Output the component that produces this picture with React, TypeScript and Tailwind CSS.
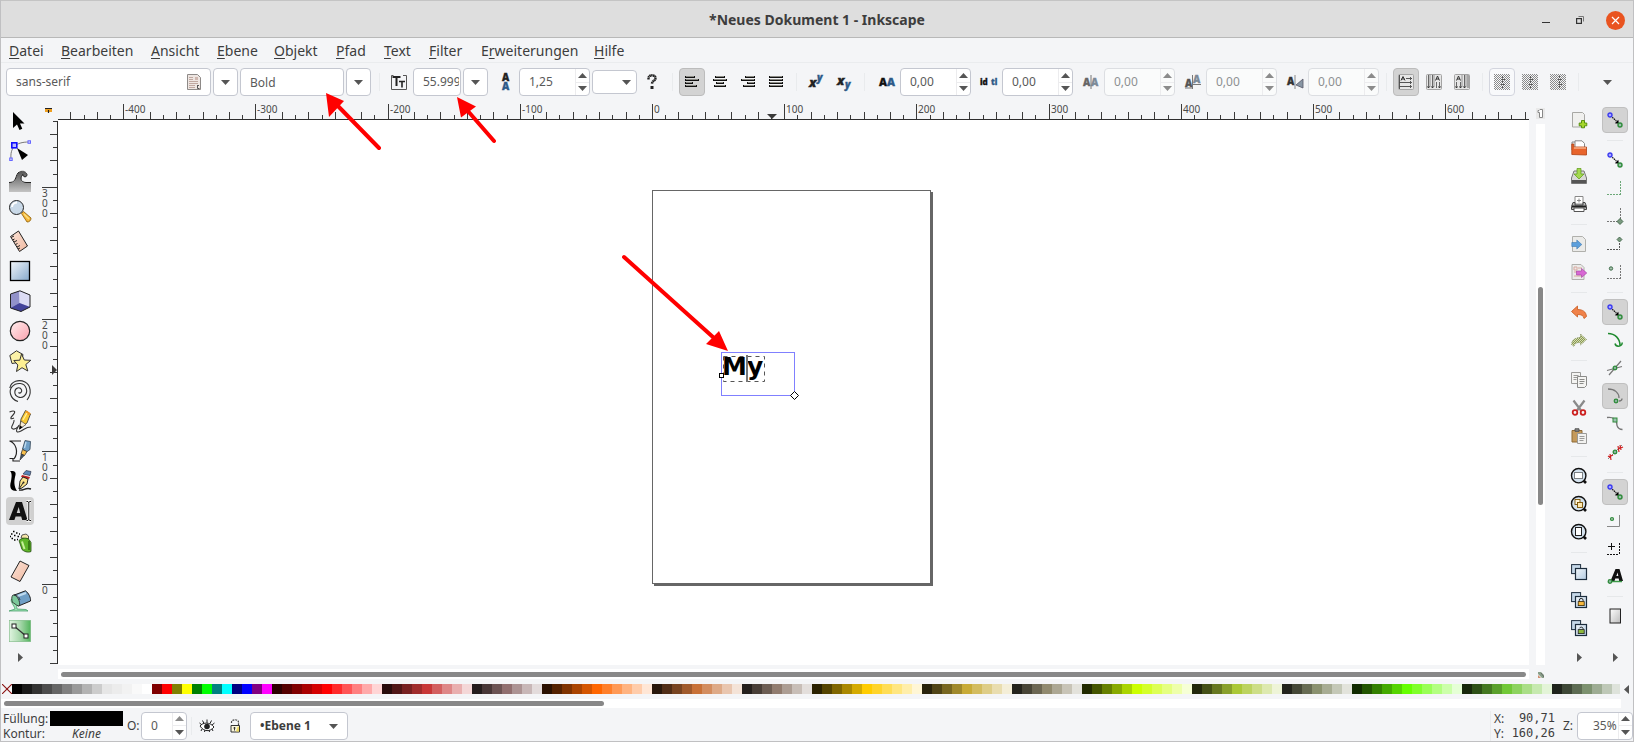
import React, { ReactNode } from "react";

/* ---------- data ---------- */

const MENUS: [string, string, string, string][] = [
  ["", "D", "atei", "w-[36px]"],
  ["", "B", "earbeiten", "w-[74px]"],
  ["", "A", "nsicht", "w-[50px]"],
  ["", "E", "bene", "w-[41px]"],
  ["", "O", "bjekt", "w-[46px]"],
  ["", "P", "fad", "w-[32px]"],
  ["", "T", "ext", "w-[29px]"],
  ["", "F", "ilter", "w-[36px]"],
  ["E", "r", "weiterungen", "w-[97px]"],
  ["", "H", "ilfe", "w-[32px]"],
];

const PALETTE = (
  "000000 1a1a1a 333333 4d4d4d 666666 808080 999999 b3b3b3 cccccc e6e6e6 ececec f2f2f2 f9f9f9 ffffff " +
  "800000 ff0000 808000 ffff00 008000 00ff00 008080 00ffff 000080 0000ff 800080 ff00ff " +
  "2b0000 550000 800000 aa0000 d40000 ff0000 ff2a2a ff5555 ff8080 ffaaaa ffd5d5 " +
  "280b0b 501616 782121 a02c2c c83737 d35f5f de8787 e9afaf f4d7d7 " +
  "241c1c 483737 6c5353 916f6f ac9393 c8b7b7 e3dbdb " +
  "2b1100 552200 803300 aa4400 d45500 ff6600 ff7f2a ff9955 ffb380 ffccaa ffe6d5 " +
  "28170b 502d16 784421 a05a2c c87137 d38d5f deaa87 e9c6af f4e3d7 " +
  "241f1c 483e37 6c5d53 917c6f ac9d93 c8beb7 e3dedb " +
  "2b2200 554400 806600 aa8800 d4aa00 ffcc00 ffd42a ffdd55 ffe680 ffeeaa fff6d5 " +
  "28220b 504416 786721 a0892c c8ab37 d3bc5f decd87 e9ddaf f4eed7 " +
  "24231c 484537 6c6753 918a6f aca793 c8c4b7 e3e2db " +
  "222b00 445500 668000 88aa00 aad400 ccff00 d4ff2a ddff55 e5ff80 eeffaa f6ffd5 " +
  "22280b 445016 677821 89a02c abc837 bcd35f cdde87 dde9af eef4d7 " +
  "23241c 454837 676c53 8a916f a7ac93 c4c8b7 e2e3db " +
  "112b00 225500 338000 44aa00 55d400 66ff00 7fff2a 99ff55 b3ff80 ccffaa e5ffd5 " +
  "17280b 2d5016 447821 5aa02c 71c837 8dd35f aade87 c6e9af e3f4d7 " +
  "1f241c 3e4837 5d6c53 7c916f 9dac93 bec8b7 dee3db"
).split(" ");

const STEP = 13.22;

/* ---------- small parts ---------- */

function Ico({ s = 16, children }: { s?: number; children: ReactNode }) {
  return (
    <svg width={s} height={s} viewBox={`0 0 ${s} ${s}`} fill="none" aria-hidden="true" className="shrink-0 overflow-visible">
      {children}
    </svg>
  );
}

function Tri({ dir, dim }: { dir: "up" | "down" | "left" | "right"; dim?: boolean }) {
  const d = {
    down: "M1 3h9l-4.500 5z",
    up: "M1 8h9l-4.500-5z",
    left: "M8 1v9l-5-4.500z",
    right: "M3 1v9l5-4.500z",
  }[dir];
  return (
    <svg width="11" height="11" viewBox="0 0 11 11" aria-hidden="true" className="shrink-0">
      <path d={d} fill={dim ? "#8b8b8b" : "#555555"} />
    </svg>
  );
}

function Btn({ label, on, framed, children }: { label: string; on?: boolean; framed?: boolean; children: ReactNode }) {
  const look = on ? "border-[#bcbcbc] bg-[#d3d3d3]" : framed ? "border-[#d3d5de] bg-[#f8f9fb]" : "border-transparent";
  return (
    <button aria-label={label} className={`flex h-7 w-[26px] shrink-0 items-center justify-center rounded-[4px] border ${look}`}>
      {children}
    </button>
  );
}

function Drop({ label }: { label: string }) {
  return (
    <button aria-label={label} className="flex h-7 w-[25px] shrink-0 items-center justify-center rounded-[4px] border border-[#c4c7d0] bg-white">
      <Tri dir="down" />
    </button>
  );
}

function Spin({ label, value, width, dim, dimUp, pad = "pl-[9px]" }: { label: string; value: string; width: string; dim?: boolean; dimUp?: boolean; pad?: string }) {
  return (
    <div className={`flex h-7 shrink-0 overflow-hidden rounded-[4px] border ${width} ${dim ? "border-[#dcdee2] bg-[#fafbfb]" : "border-[#c4c7d0] bg-white"}`}>
      <input aria-label={label} defaultValue={value} disabled={dim} className={`min-w-0 flex-1 bg-transparent text-xs outline-none ${pad} ${dim ? "text-[#8e9092]" : "text-[#5a5a5a]"}`} />
      <div className="flex w-[14px] shrink-0 flex-col border-l border-[#ececee]">
        <button aria-label={label + " erhöhen"} className="flex flex-1 items-center justify-center border-b border-[#ececee]">
          <Tri dir="up" dim={dim || dimUp} />
        </button>
        <button aria-label={label + " verringern"} className="flex flex-1 items-center justify-center">
          <Tri dir="down" dim={dim} />
        </button>
      </div>
    </div>
  );
}

function Tag({ children }: { children: ReactNode }) {
  return <span className="flex w-[27px] shrink-0 items-center justify-center pl-1">{children}</span>;
}

function VSep({ w = "w-[10px]" }: { w?: string }) {
  return (
    <span className={`flex shrink-0 justify-center ${w}`}>
      <span className="h-[18px] w-px bg-[#e9ebed]" />
    </span>
  );
}

function HSep() {
  return (
    <span className="flex h-3 w-7 shrink-0 items-center justify-center">
      <span className="h-px w-4 bg-[#e6e8ea]" />
    </span>
  );
}

/* ---------- toolbar glyphs ---------- */

function Lines({ rows }: { rows: [number, number][] }) {
  return (
    <Ico>
      {rows.map(([x, w], i) => (
        <g key={i}>
          <rect x={x} y={2 + i * 3} width={w} height="2" rx="0.5" fill="#8b8b84" />
          <rect x={x} y={3 + i * 3} width={w} height="1" fill="#111" />
          <rect x={x} y={2 + i * 3} width="1" height="2" fill="#111" />
          <rect x={x + w - 1} y={2 + i * 3} width="1" height="2" fill="#111" />
        </g>
      ))}
    </Ico>
  );
}

function Glyph({ x, y, size, fill, children, italic }: { x: number; y: number; size: number; fill: string; children: string; italic?: boolean }) {
  return (
    <text x={x} y={y} fontSize={size} fontWeight="800" fill={fill} stroke={fill} strokeWidth="0.3" fontStyle={italic ? "italic" : "normal"} fontFamily='"Open Sans", "Noto Sans", sans-serif'>
      {children}
    </text>
  );
}

function WritingMode({ kind }: { kind: "h" | "vr" | "vl" }) {
  return (
    <Ico>
      <rect x="0.500" y="0.500" width="15" height="15" rx="1" fill="#e6e6e6" stroke="#a4a4a4" />
      {kind === "h" ? (
        <>
          <path d="M1.500 1v14M1.500 8.500h12M1.500 12.500h12M8 4.500h6M12 3l1.500 1.500L12 6M12 7l1.500 1.500L12 10M12 11l1.500 1.500L12 14" stroke="#444" strokeWidth="0.900" />
          <path d="M3 6.500l2-4 2 4M3.500 5h3" stroke="#333" />
        </>
      ) : kind === "vr" ? (
        <>
          <path d="M4 1v12M8 1v12" stroke="#bdbdbd" strokeWidth="2" />
          <path d="M2.500 1v13M6.500 1v13M10.500 8v6M13.500 8v6" stroke="#666" />
          <path d="M1.500 12.500l1 1.500 1-1.500M5.500 12.500l1 1.500 1-1.500M12.500 12.500l1 1.500 1-1.500" stroke="#333" />
          <path d="M9.500 6.500l2-4.500 2 4.500M10 5h3" stroke="#333" />
        </>
      ) : (
        <>
          <path d="M8 1v12M12 1v12" stroke="#bdbdbd" strokeWidth="2" />
          <path d="M2.500 8v6M6.500 8v6M10.500 1v13M14 1v13" stroke="#666" />
          <path d="M1.500 12.500l1 1.500 1-1.500M5.500 12.500l1 1.500 1-1.500M9.500 12.500l1 1.500 1-1.500" stroke="#333" />
          <path d="M2.500 6.500l2-4.500 2 4.500M3 5h3" stroke="#333" />
        </>
      )}
    </Ico>
  );
}

function Orientation({ shift }: { shift: number }) {
  return (
    <Ico>
      <rect width="16" height="16" fill="url(#dots)" shapeRendering="crispEdges" />
      <path d={`M${8.5 + shift} 2v2M${7 + shift} 5.500h4M${8.5 + shift} 7v2M${7 + shift} 10.500h4M${8.5 + shift} 12v2`} stroke="#5a5a5a" />
    </Ico>
  );
}

/* ---------- toolbox ---------- */

const TOOLS: [string, ReactNode][] = [
  ["Auswählen", <path key="a" d="M4 2v16l4-3.500 2.500 5.500 2.800-1.300L11 13.500h4.500z" fill="#000" />],
  ["Knoten", (
    <g key="b">
      <path d="M2 19C1 8 6 2 20 2" stroke="#777" />
      <rect x="2.800" y="2.800" width="5" height="5" fill="#bcbcff" stroke="#1010ff" strokeWidth="1.600" />
      <rect x="19" y="0.800" width="2.500" height="2.500" fill="#ccf" stroke="#66f" />
      <rect x="0.700" y="18" width="2.500" height="2.500" fill="#ccf" stroke="#66f" />
      <path d="M8 8l11 7-6 5z" fill="#000" />
    </g>
  )],
  ["Modellieren", (
    <g key="c">
      <path d="M0 13c6 0 6-3 8-8 2-5 9-5 10 0 0 3-4 3-4 0-3 2-3 8 3 8h5v9H0z" fill="url(#wave)" />
      <path d="M0 12.500c6 0 6-3 8-8 2-4.500 9-4.500 10 0 0 3-4 3-4 0-3 2-3 8 3 8h5" stroke="#222" />
      <path d="M1 10.500c4 0 4-3 6-6.500C9-.5 17-.5 18.500 4" stroke="#fff" strokeWidth="0.600" />
    </g>
  )],
  ["Zoom", (
    <g key="d">
      <path d="M12.500 13.500l2-2 7.500 6.500c0 2.500-1.500 4-4 4z" fill="#f6b73c" stroke="#8a5a00" strokeWidth="0.800" />
      <path d="M15 14l5 5" stroke="#fde080" strokeWidth="1.500" />
      <circle cx="7.500" cy="7.500" r="7" fill="#c9d9e8" stroke="#222" />
      <path d="M3 7a5 5 0 015-4.500" stroke="#fff" strokeWidth="2" />
    </g>
  )],
  ["Messen", (
    <g key="e">
      <path d="M1.500 6.500l8-5.500 9 15-8 5.500z" fill="url(#pink)" stroke="#222" />
      <path d="M2 7.500l3-1.500M3.500 10l2-1M5 12l3-1.500M6.500 14.500l2-1M8 17l3-1.500M9 19l2-1" stroke="#222" />
    </g>
  )],
  ["Rechteck", <rect key="f" x="1.500" y="1.500" width="19" height="19" fill="url(#steel)" stroke="#000" strokeWidth="1.300" />],
  ["3D-Box", (
    <g key="g">
      <path d="M1.500 4L11 .8l10 4.200v12L12 21.500 1.500 18z" fill="#b4b4de" />
      <path d="M1.500 4l8.500-3 .5 12-9 5z" fill="#9292ca" />
      <path d="M10 1l11 4v12l-10.500-4z" fill="#dcdcf4" />
      <path d="M1.500 18l9-5L21 17l-9 4.500z" fill="#44449a" />
      <path d="M1.500 4L11 .8l10 4.200v12L12 21.500 1.500 18z" stroke="#222" />
    </g>
  )],
  ["Ellipse", <circle key="h" cx="11" cy="11" r="9.700" fill="url(#rose)" stroke="#222" strokeWidth="1.200" />],
  ["Stern", (
    <g key="i">
      <path d="M.8 5.500L7.500.8 14 4.500 12.500 12l-9.500 1.500z" fill="#fbf2a8" stroke="#333" />
      <path d="M12.500 4l2.800 6 6.500.3-5 4.200 2 6.500-5.800-3.300-5.500 3.800 1.300-6.500-4-4.500 6-.3z" fill="#fdf092" stroke="#333" />
    </g>
  )],
  ["Spirale", <path key="j" d="M9.500 12.500c1.500 1.500 4-.5 3-2.700C11 6.500 6 7.500 5.800 12c0 5 6 7 9.500 4 4.500-4 2-12-4-12.500C4 3 0 9 1.500 14c1 4 4 6.500 7.500 7.500M18 20c5-6 4-15-2-18C10-1 2 1 .8 8" stroke="#333" strokeWidth="1.100" />],
  ["Freihand", (
    <g key="k">
      <path d="M.5 2C6-.5 7 2 4 5s-3 5 1 3M5 10c1 3-5 8-1 9s8-7 5-2-1 6 3 4 5-4 10-4" stroke="#333" strokeWidth="1.100" />
      <path d="M10.500 19L12 9l4.500-8.500L21.500 4 18 13z" fill="#f8c832" stroke="#333" strokeWidth="0.800" />
      <path d="M10.500 19L12 11l5 3.500z" fill="#f8ecd4" stroke="#333" strokeWidth="0.600" />
      <path d="M10.300 19.500l.8-4 2.600 1.800z" fill="#000" />
      <path d="M17 1.500l4 3" stroke="#f09820" strokeWidth="2.400" />
      <path d="M14 10l4-7" stroke="#fff0a0" strokeWidth="1.300" />
    </g>
  )],
  ["Bézier", (
    <g key="l">
      <path d="M.5 1H12M.5 1C7 3 10 12 5 19M.5 18.500H4v2.500h7" stroke="#222" strokeWidth="1.200" />
      <path d="M13.500 9l2.500-8.500 5.500 1-.5 8-3.500 2.500z" fill="#6fa0c8" stroke="#234" strokeWidth="0.700" />
      <path d="M15.500 8l1.500-6" stroke="#c0dcf0" strokeWidth="1.300" />
      <path d="M12 14l1.500-4.500 4.500 2-2.500 4z" fill="#f8c04c" stroke="#333" strokeWidth="0.800" />
      <path d="M11 20l1.200-6 3 1.500z" fill="#456" stroke="#222" strokeWidth="0.600" />
    </g>
  )],
  ["Kalligrafie", (
    <g key="m">
      <path d="M1 1c4 0 7 0 5 6-1 5-1 9 2 14-6 0-8-3-6-10 1-5 1-8-1-10z" fill="#000" />
      <path d="M14 4l3-3.500 5 1-1 4z" fill="#5a86b8" stroke="#223" strokeWidth="0.600" />
      <path d="M13 5l8 2-1 2-8-2z" fill="#c02020" />
      <path d="M10 19l1-8 3-4 5 2-1 5-5 4z" fill="#fbe28a" stroke="#222" />
      <path d="M10 19l4-6" stroke="#222" /><circle cx="14.500" cy="12.500" r="1" fill="#222" />
      <path d="M10 20c5 1 6-3 12-1" stroke="#222" strokeWidth="1.400" />
    </g>
  )],
  ["Text", (
    <g key="n">
      <path fillRule="evenodd" d="M0 20L7 2h6l5.500 18h-5.300l-1-3.500H6.600L5.400 20zM7.700 13h3.500L9.700 7z" fill="#111" />
      <path d="M17.500 1.500h1.500l.8.8.8-.8H22M19.800 2v18M17.500 20.500h1.500l.8-.8.8.8H22" stroke="#fff" strokeWidth="2.600" />
      <path d="M17.500 1.500h1.500l.8.800.8-.8H22M19.800 2v18M17.500 20.500h1.500l.8-.8.8.8H22" stroke="#111" />
    </g>
  )],
  ["Spray", (
    <g key="o">
      <path d="M2 4h1.500M4 1.500h1.500M5 5.500h1.500M2.500 8.500H4M7 3h1.500M8.500 6.500H10M5 10h1.500M8 9.500h1M10 4h1M1 6.500h1" stroke="#000" strokeWidth="1.600" />
      <path d="M12 8l1-3 4-1 2.500 2v3z" fill="#f4e4a8" stroke="#333" strokeWidth="0.800" />
      <path d="M10 10.500c3-3 8-3 10-1l2 3v9c-3 1.500-7 0-9-2z" fill="#5fb52a" stroke="#234a10" strokeWidth="0.800" />
      <path d="M13 11.500l2.500 7.500" stroke="#c6f09a" strokeWidth="2" />
      <path d="M20 11v9" stroke="#2e6a10" strokeWidth="1.500" />
    </g>
  )],
  ["Radierer", <path key="p" d="M11 1l9 4.500L11 21.500 2 17z" fill="url(#pink)" stroke="#222" />],
  ["Füllen", (
    <g key="q">
      <path d="M2.500 9C1 12 5 15 6 19L0 21h19l-2-1.500-9-.5c-1-3 1-5 0-8z" fill="#9fe0b4" stroke="#3a9a60" strokeWidth="0.700" />
      <path d="M4 5.500L16.500.8c3 2 5.500 7 5 10.200L9.500 16z" fill="#6f9fc6" stroke="#222" />
      <path d="M7.500 6.500L17 3" stroke="#c0dcf0" strokeWidth="2.200" />
      <path d="M3.500 5.500c2-1.500 5 1 6.500 5 1 3 1 5-.5 5.500-3-1-4-3-6-3.500-1-3-1-5.500 0-7z" fill="#7cc89a" stroke="#222" strokeWidth="0.800" />
      <path d="M5 5c2 0 5 1 6 5" stroke="#222" strokeWidth="0.800" />
    </g>
  )],
  ["Verlauf", (
    <g key="r">
      <rect x="0.300" y="0.300" width="21.400" height="21.400" fill="url(#greeny)" stroke="#7cb884" strokeWidth="0.600" />
      <path d="M5 6l12 10" stroke="#333" strokeWidth="1.300" />
      <rect x="3" y="4" width="4" height="4" fill="#fff" stroke="#222" />
      <rect x="15" y="14" width="4" height="4" fill="#fff" stroke="#222" />
    </g>
  )],
];

/* ---------- command and snap bars ---------- */

const Mag = ({ children }: { children: ReactNode }) => (
  <>
    <path d="M12 12l3 3" stroke="#111" strokeWidth="2.600" />
    <circle cx="7.700" cy="7.700" r="7.200" fill="#d4e2ee" stroke="#111" strokeWidth="1.400" />
    {children}
  </>
);

const Clones = ({ children }: { children?: ReactNode }) => (
  <>
    <rect x="0.600" y="0.600" width="9" height="9" fill="#c6d8e8" stroke="#1c2c3c" />
    <rect x="4.500" y="4.500" width="11" height="11" fill="url(#sky)" stroke="#1c2c3c" strokeWidth="1.200" />
    {children}
  </>
);

const COMMANDS: [string, ReactNode][][] = [
  [
    ["Neu", <g key="1"><path d="M1.500.5h10l2 2v12.500h-12z" fill="#f0f0ee" stroke="#a8a8a4" /><path d="M10.500 8.500h3v2.500h2.300v2.800h-2.300v2h-3v-2H8.200V11h2.300z" fill="#a6d72c" stroke="#4e8a06" strokeWidth="0.900" /></g>],
    ["Öffnen", <g key="2"><path d="M1 2h9l2 3v5H1z" fill="#f2f2f0" stroke="#888" /><path d="M4 .8h7l2.500 2.700V8H4z" fill="#fff" stroke="#888" /><path d="M.8 14.500V4h2v3h12.700v8z" fill="#e8642c" stroke="#b04010" strokeWidth="0.800" /><path d="M3 8h12" stroke="#f8b088" strokeWidth="1.500" /></g>],
    ["Speichern", <g key="3"><path d="M3 3h10l2.500 7v5.500H.5V10z" fill="#d8d8d6" stroke="#777" /><path d="M1 12h14v3H1z" fill="#555" /><path d="M6 .5h4V6h3l-5 5-5-5h3z" fill="#a4d850" stroke="#5a9a14" strokeWidth="0.700" /></g>],
    ["Drucken", <g key="4"><path d="M4 .5h8V8H4z" fill="#fff" stroke="#888" /><path d="M8 2.500v4M6 4.500h4" stroke="#888" /><path d="M2 6.500h2V9h8V6.500h2l1.500 4v3H.5v-3z" fill="#bbb" stroke="#444" /><path d="M1 10.500h14" stroke="#222" strokeWidth="2" /><path d="M3 12h10v3.500H3z" fill="#fff" stroke="#555" /></g>],
  ],
  [
    ["Importieren", <g key="1"><path d="M1.500.5h10l3 3v12h-13z" fill="#ebebe9" stroke="#b0b0ac" /><path d="M.8 6.500h5V4l5 4.500-5 4.500v-2.500h-5z" fill="#5c9fdc" stroke="#3e78b0" strokeWidth="0.600" /></g>],
    ["Exportieren", <g key="2"><path d="M1 .5h9l3 3v12H1z" fill="#ebebe9" stroke="#b0b0ac" /><path d="M3 3h3v3H3zM7 4h4M3 8h4M3 12h9" stroke="#d8a8a0" /><path d="M5.500 7h5V4.500l5.300 4.500-5.300 4.500V11h-5z" fill="#d868d4" stroke="#a040a0" strokeWidth="0.600" /></g>],
  ],
  [
    ["Rückgängig", <path key="1" d="M.5 7.500L6.500 2v3.500c5 0 8.500 2 9 7l-2.500 2c-.5-3-2.500-4-6.500-4V13z" fill="#f0824a" stroke="#c85a20" strokeWidth="0.800" />],
    ["Wiederholen", <path key="2" d="M15.500 7.500L9.500 2v3.500c-5 0-8.500 2-9 7l2.500 2c.5-3 2.500-4 6.500-4V13z" fill="url(#redo)" stroke="#7c8a58" strokeWidth="0.800" strokeDasharray="1 1" />],
  ],
  [
    ["Kopieren", <g key="1"><path d="M.5.5h9v11h-9zM2.500 3.500h5M2.500 5.500h5M2.500 7.500h3" fill="#f4f4f2" stroke="#9a9a98" /><path d="M6.500 4.500h9v9l-2 2h-7zM8.500 7.500h5M8.500 9.500h5M8.500 11.500h4" fill="#f4f4f2" stroke="#8a8a88" /></g>],
    ["Ausschneiden", <g key="2"><path d="M2.500.5l7.500 10M13.500.5L6 10.500" stroke="#8a8a8a" strokeWidth="2.200" /><circle cx="4" cy="12.500" r="2.300" stroke="#cc2020" strokeWidth="1.800" /><circle cx="12" cy="12.500" r="2.300" stroke="#cc2020" strokeWidth="1.800" /></g>],
    ["Einfügen", <g key="3"><path d="M1 2.500h10v11.500H1z" fill="#c49a5c" stroke="#8e6a34" /><path d="M4 .8h4v2.500H4z" fill="#888" stroke="#555" /><path d="M6.500 5.500h9v10h-9zM8.500 8.500h5M8.500 10.500h5M8.500 12.500h4" fill="#f2f2f0" stroke="#9a9a98" /></g>],
  ],
  [
    ["Auswahl zoomen", <Mag key="1"><rect x="3.500" y="4.500" width="8" height="6" fill="#fff" stroke="#111" strokeDasharray="1 1" /></Mag>],
    ["Zeichnung zoomen", <Mag key="2"><rect x="4" y="3.500" width="5" height="5" fill="#fff6dc" stroke="#7a5000" strokeWidth="0.900" /><rect x="6.500" y="6.500" width="5" height="5" fill="#ffe9b0" stroke="#7a5000" strokeWidth="0.900" /></Mag>],
    ["Seite zoomen", <Mag key="3"><rect x="4.500" y="3.500" width="6" height="8" fill="#fff" stroke="#222" /></Mag>],
  ],
  [
    ["Duplizieren", <Clones key="1" />],
    ["Klonen", <Clones key="2"><path d="M8.300 9.500V8.300a1.900 1.900 0 013.800 0v1.200" stroke="#222" /><rect x="7.200" y="9.600" width="6" height="4" fill="#f8b83c" stroke="#3a2800" strokeWidth="0.800" /></Clones>],
    ["Klon trennen", <Clones key="3"><path d="M8.500 8.300a1.900 1.900 0 013.600.3v1" stroke="#222" /><rect x="7.200" y="9.600" width="6" height="4" fill="#8cb83c" stroke="#222" strokeWidth="0.800" /></Clones>],
  ],
];

const Dot = ({ x, y }: { x: number; y: number }) => (
  <circle cx={x} cy={y} r="1.800" fill="#8fb4a4" stroke="#2e8b3a" strokeWidth="1.300" />
);

const SnapArrow = () => (
  <>
    <path d="M5.300 5.300l4 3.700" stroke="#111" strokeWidth="1.200" strokeDasharray="1.500 0.700" />
    <path d="M7.800 11.300l3.500-3.500.6 4z" fill="#000" />
    <circle cx="3" cy="3" r="2" fill="#a8a8ff" stroke="#3a3af0" strokeWidth="1.400" />
    <circle cx="13" cy="13" r="2" fill="#9cc0b0" stroke="#2e8b3a" strokeWidth="1.400" />
  </>
);

const SNAPS: [string, boolean, ReactNode][][] = [
  [["Einrasten", true, <SnapArrow key="1" />]],
  [
    ["Umrandungsbox", false, <SnapArrow key="1" />],
    ["Kanten", false, <path key="2" d="M0 14.500h14M13.500 1v13" stroke="#6ca878" strokeDasharray="2 1" />],
    ["Ecken", false, <g key="3"><path d="M0 13.500h11M13.500 0v11" stroke="#777" strokeDasharray="2 1" /><path d="M13 10.500l3 3-3 3-3-3z" fill="#7a9a80" stroke="#345a3c" strokeWidth="0.800" /></g>],
    ["Kantenmitten", false, <g key="4"><path d="M0 13.500h13M12.500 7v7" stroke="#555" strokeDasharray="2 1" /><path d="M12.500 1l2.500 2.500L12.500 6 10 3.500z" fill="#7a9a80" stroke="#345a3c" strokeWidth="0.800" /></g>],
    ["Boxmitten", false, <g key="5"><path d="M0 14.500h14M13.500 1v13" stroke="#777" strokeDasharray="2 1" /><circle cx="4" cy="4.500" r="1.700" fill="#a8c4b0" stroke="#3c6a48" /></g>],
  ],
  [
    ["Knoten", true, <SnapArrow key="1" />],
    ["Pfade", false, <path key="2" d="M1 1.500c7 0 12 5 12 12M8 11.500c.5 2 2 3 4.500 2.500 2-.5 3-2 2.500-3.500" stroke="#1e8a2e" strokeWidth="1.500" />],
    ["Überschneidungen", false, <g key="3"><path d="M2 15L14 1M0 10.500l15-4" stroke="#777" strokeWidth="1.200" /><Dot x={8} y={8} /></g>],
    ["Spitzen", true, <g key="4"><path d="M1 1c7 0 11 4 11 9M12 13c1.500 0 3-1 3-2.500" stroke="#777" strokeWidth="1.300" /><Dot x={9} y={13} /></g>],
    ["Glatte Knoten", false, <g key="5"><path d="M0 1.500c6-1 10 2 10 8 1 3 3 4 5.500 4" stroke="#777" strokeWidth="1.300" /><rect x="6" y="2" width="4" height="4" fill="#9cc0b0" stroke="#2e8b3a" /></g>],
    ["Linienmitten", false, <g key="6"><path d="M1 15L15 1" stroke="#888" /><path d="M1 12l3 2M3 10l1 6M11 2l1 6M13 1l1 5M2 13l4-2M11 5l5-2" stroke="#d02020" strokeWidth="1.200" /><Dot x={8} y={8} /></g>],
  ],
  [
    ["Andere", true, <SnapArrow key="1" />],
    ["Objektmitten", false, <g key="2"><path d="M0 14.500h12.500V3" stroke="#888" /><circle cx="5" cy="7" r="1.500" fill="#a8c4b0" stroke="#2e8b3a" strokeWidth="1.200" /></g>],
    ["Rotationszentren", false, <g key="3"><path d="M0 14.500h12M12.500 3v12" stroke="#111" strokeDasharray="2 1" /><path d="M4.500 3v7M1 6.500h7" stroke="#111" /></g>],
    ["Textgrundlinien", false, <g key="4"><path fillRule="evenodd" d="M3.500 13L8.500 1h4l3.500 12h-3.800l-.5-2.500H8.300L7.500 13zM9.300 8h2L10.700 4.500z" fill="#111" /><path d="M2 13.500h13" stroke="#3c9a48" strokeWidth="1.500" /><Dot x={3} y={13.500} /></g>],
  ],
  [["Seitenrand", false, <rect key="1" x="3" y="1" width="10.500" height="14" fill="url(#page)" stroke="#222" />]],
];

/* ---------- rulers ---------- */

function TopRuler() {
  const origin = 594;
  const ticks: ReactNode[] = [];
  for (let i = -44; i <= 66; i++) {
    const x = Math.round(origin + i * STEP);
    const top = i % 10 === 0 ? 3 : i % 2 === 0 ? 11 : 14;
    if (x < 1) continue;
    ticks.push(<rect key={i} x={x} y={top} width="1" height={18 - top} fill="#3a3a3a" />);
    if (i % 10 === 0) {
      ticks.push(
        <text key={"t" + i} x={x + 2} y="12" fontSize="10" fill="#4a4a4a">
          {i * 10}
        </text>
      );
    }
  }
  return (
    <svg className="h-[19px] w-full" aria-hidden="true">
      {ticks}
      <rect x="0" y="18" width="100%" height="1" fill="#2e2e2e" />
      <path d="M709 13h10l-5 5z" fill="#3a3a3a" />
    </svg>
  );
}

function SideRuler() {
  const ticks: ReactNode[] = [];
  for (let i = -6; i <= 35; i++) {
    const y = Math.floor(463 - i * STEP);
    const left = i % 10 === 0 ? 3 : i % 2 === 0 ? 11 : 14;
    if (y < 0) continue;
    ticks.push(<rect key={i} x={left} y={y} width={18 - left} height="1" fill="#3a3a3a" />);
    if (i % 10 === 0) {
      String(i * 10)
        .split("")
        .forEach((ch, k) =>
          ticks.push(
            <text key={i + "-" + k} x="3" y={y + 10 + k * 10} fontSize="10" fill="#4a4a4a">
              {ch}
            </text>
          )
        );
    }
  }
  return (
    <svg className="h-full w-[19px]" aria-hidden="true">
      {ticks}
      <rect x="18" y="0" width="1" height="100%" fill="#2e2e2e" />
      <path d="M13 244v10l5-5z" fill="#3a3a3a" />
    </svg>
  );
}

/* ---------- page ---------- */

export default function App() {
  return (
    <div className='relative flex h-screen flex-col overflow-hidden border border-t-0 border-[#c0c0c2] bg-[#f4f5f7] font-["Noto_Sans",sans-serif] text-[#3d3d3d]'>
      <svg width="0" height="0" className="absolute" aria-hidden="true">
        <defs>
          <linearGradient id="wave" x2="0" y2="1"><stop stopColor="#555" /><stop offset="1" stopColor="#c4c4c4" /></linearGradient>
          <linearGradient id="pink" x2="1" y2="1"><stop stopColor="#fbe4d8" /><stop offset="1" stopColor="#f0b8a0" /></linearGradient>
          <linearGradient id="steel" x2="1" y2="1"><stop stopColor="#f2f6fa" /><stop offset="1" stopColor="#86a9cc" /></linearGradient>
          <linearGradient id="sky" x2="1" y2="1"><stop stopColor="#f2f7fb" /><stop offset="1" stopColor="#b4cce2" /></linearGradient>
          <linearGradient id="rose" x2="1" y2="1"><stop stopColor="#fff0f0" /><stop offset="1" stopColor="#fba0ac" /></linearGradient>
          <linearGradient id="greeny" x2="1" y2="0"><stop stopColor="#e0f4e0" /><stop offset="0.5" stopColor="#a8d8ac" /><stop offset="1" stopColor="#52b45c" /></linearGradient>
          <linearGradient id="page" x2="1" y2="1"><stop stopColor="#fff" /><stop offset="1" stopColor="#bbb" /></linearGradient>
          <pattern id="dots" width="2" height="2" patternUnits="userSpaceOnUse"><rect width="1" height="1" fill="#8a8a8a" /><rect x="1" y="1" width="1" height="1" fill="#8a8a8a" /></pattern>
          <pattern id="redo" width="2" height="2" patternUnits="userSpaceOnUse"><rect width="2" height="2" fill="#d4dcb4" /><rect width="1" height="1" fill="#8a9a50" /><rect x="1" y="1" width="1" height="1" fill="#8a9a50" /></pattern>
        </defs>
      </svg>

      {/* title bar */}
      <header className="grid h-[38px] shrink-0 grid-cols-[1fr_auto_1fr] items-center border-b border-t border-b-[#b8b8b8] border-t-[#c4c4c4] bg-[#dedede] pt-0.5">
        <span />
        <h1 className="text-sm font-bold text-[#3d3d3d]">*Neues Dokument 1 - Inkscape</h1>
        <div className="flex items-center justify-end gap-5 pr-2">
          <button aria-label="Minimieren" className="flex h-4 w-3 items-end justify-center pb-[5px]">
            <span className="h-px w-2 bg-[#333]" />
          </button>
          <button aria-label="Wiederherstellen" className="ml-0.5">
            <Ico s={12}><path d="M4.500 2.500h5v5" stroke="#777" /><rect x="2.600" y="4.600" width="4.800" height="4.800" stroke="#333" strokeWidth="1.200" /></Ico>
          </button>
          <button aria-label="Schließen" className="flex size-[19px] items-center justify-center rounded-full bg-[#e95420]">
            <Ico s={9}><path d="M1 1l7 7M8 1l-7 7" stroke="#fff" strokeWidth="1.200" /></Ico>
          </button>
        </div>
      </header>

      {/* menu */}
      <nav className="flex h-[25px] shrink-0 items-center gap-4 border-b border-[#eaecee] pl-2 pt-0.5 text-sm">
        {MENUS.map(([pre, key, rest, w]) => (
          <button key={key + rest} className={`shrink-0 whitespace-nowrap text-left ${w}`}>
            {pre}
            <span className="underline underline-offset-2">{key}</span>
            {rest}
          </button>
        ))}
      </nav>

      {/* text tool bar */}
      <div className="flex h-[38px] shrink-0 items-center gap-0.5 pl-[5px] pr-[13px]">
        <div className="flex h-7 w-[205px] shrink-0 items-center rounded-[4px] border border-[#c4c7d0] bg-white pl-[9px] pr-2">
          <input aria-label="Schriftfamilie" defaultValue="sans-serif" className="min-w-0 flex-1 bg-transparent text-xs text-[#5a5a5a] outline-none" />
          <Ico>
            <path d="M1.500.5h10l3 3v12h-13z" fill="#eee6e2" stroke="#8e8a88" />
            <path d="M3 3.500h4M3 5.500h4M3 7.500h9M3 9.500h9M3 11.500h6M3 13.500h6" stroke="#c0a8a0" />
            <path d="M9 3h3v3H9z" fill="#d0b8b0" /><path d="M11 11.500h2M11.500 11v3.500h2" stroke="#555" />
          </Ico>
        </div>
        <Drop label="Schriftfamilie wählen" />
        <input aria-label="Schriftstil" defaultValue="Bold" className="h-7 w-[104px] shrink-0 rounded-[4px] border border-[#c4c7d0] bg-white pl-[9px] text-xs text-[#5a5a5a] outline-none" />
        <Drop label="Schriftstil wählen" />
        <VSep w="w-[12px]" />
        <span className="flex w-6 shrink-0 justify-center">
          <Ico>
            <path d="M2.500 1.500h-2v14h15v-14H12" stroke="#555" />
            <path d="M1.500 3h8M5.500 3v9" stroke="#222" strokeWidth="2" />
            <path d="M8 7.500h6M11 7.500v6" stroke="#222" strokeWidth="1.600" />
          </Ico>
        </span>
        <div className="flex h-7 w-12 shrink-0 items-center overflow-hidden rounded-[4px] border border-[#c4c7d0] bg-white pl-[9px] pr-px">
          <input aria-label="Schriftgröße" defaultValue="55.999" className="min-w-0 flex-1 bg-transparent text-xs text-[#5a5a5a] outline-none" />
        </div>
        <Drop label="Schriftgröße wählen" />
        <Tag>
          <svg width="10" height="18" viewBox="0 0 10 18" aria-hidden="true" className="overflow-visible">
            <Glyph x={1} y={8} size={10} fill="#222">A</Glyph>
            <Glyph x={1} y={17} size={10} fill="#2e5a88">A</Glyph>
          </svg>
        </Tag>
        <Spin label="Zeilenabstand" value="1,25" width="w-[71px]" />
        <div className="relative w-[45px] shrink-0">
          <select aria-label="Einheit" className="block h-6 w-full appearance-none rounded-[4px] border border-[#c4c7d0] bg-white">
            <option></option>
          </select>
          <span className="pointer-events-none absolute right-[5px] top-[7px]"><Tri dir="down" /></span>
        </div>
        <Btn label="Hilfe">
          <Ico>
            <path d="M4.500 5.500V4c0-3.500 7-3.500 7 0 0 3-3.500 2.500-3.500 6" stroke="#222" strokeWidth="2.400" strokeDasharray="1.500 0.300" />
            <rect x="6.500" y="12" width="3" height="3" fill="#222" />
          </Ico>
        </Btn>
        <VSep />
        <Btn label="Linksbündig" on><Lines rows={[[1, 10], [1, 14], [1, 8], [1, 12]]} /></Btn>
        <Btn label="Zentriert"><Lines rows={[[3, 10], [1, 14], [4, 8], [2, 12]]} /></Btn>
        <Btn label="Rechtsbündig"><Lines rows={[[5, 10], [1, 14], [7, 8], [3, 12]]} /></Btn>
        <Btn label="Blocksatz"><Lines rows={[[1, 14], [1, 14], [1, 14], [1, 14]]} /></Btn>
        <VSep />
        <Btn label="Hochgestellt"><Ico><Glyph x={1} y={13} size={13} fill="#222" italic>x</Glyph><Glyph x={9} y={7} size={10} fill="#2e5a88" italic>y</Glyph></Ico></Btn>
        <Btn label="Tiefgestellt"><Ico><Glyph x={1} y={11} size={13} fill="#222" italic>x</Glyph><Glyph x={9} y={14} size={10} fill="#2e5a88" italic>y</Glyph></Ico></Btn>
        <VSep />
        <Tag><Ico><Glyph x={0} y={12} size={11} fill="#111">A</Glyph><Glyph x={8} y={12} size={11} fill="#2e5a88">A</Glyph></Ico></Tag>
        <Spin label="Zeichenabstand" value="0,00" width="w-[71px]" />
        <Tag><Ico><Glyph x={-1} y={11} size={8} fill="#111">id</Glyph><Glyph x={10} y={11} size={8} fill="#2e5a88">tl</Glyph></Ico></Tag>
        <Spin label="Wortabstand" value="0,00" width="w-[71px]" />
        <Tag><Ico><Glyph x={0} y={12} size={10} fill="#666">A</Glyph><Glyph x={8} y={12} size={10} fill="#7c8a98">A</Glyph><path d="M8 1v14" stroke="#777" /></Ico></Tag>
        <Spin label="Horizontale Unterschneidung" value="0,00" width="w-[71px]" dim />
        <Tag><Ico><Glyph x={0} y={13} size={10} fill="#555">A</Glyph><Glyph x={8} y={9} size={10} fill="#7c8a98">A</Glyph><path d="M7.500 1v14M0 14h8M8 10.500h8" stroke="#777" /></Ico></Tag>
        <Spin label="Vertikale Verschiebung" value="0,00" width="w-[71px]" dim />
        <Tag><Ico><Glyph x={0} y={11} size={10} fill="#333">A</Glyph><path d="M8 1v14" stroke="#888" /><path d="M9 11l7-6v9z" fill="#8896a4" stroke="#556" strokeWidth="0.800" /></Ico></Tag>
        <Spin label="Zeichendrehung" value="0,00" width="w-[71px]" dim />
        <VSep />
        <Btn label="Horizontaler Text" on><WritingMode kind="h" /></Btn>
        <Btn label="Vertikaler Text, rechts nach links"><WritingMode kind="vr" /></Btn>
        <Btn label="Vertikaler Text, links nach rechts"><WritingMode kind="vl" /></Btn>
        <VSep />
        <Btn label="Automatische Ausrichtung" framed><Orientation shift={0} /></Btn>
        <Btn label="Aufrechte Glyphen"><Orientation shift={0} /></Btn>
        <Btn label="Seitliche Glyphen"><Orientation shift={1} /></Btn>
        <VSep />
        <span className="flex-1" />
        <Btn label="Mehr"><Tri dir="down" /></Btn>
      </div>

      {/* workspace */}
      <main className="flex min-h-0 flex-1">
        <div className="flex w-[38px] shrink-0 flex-col items-center pt-[5px]">
          {TOOLS.map(([name, art]) => (
            <button key={name} aria-label={name} className="flex h-[30px] shrink-0 items-center justify-center">
              <span className={`flex size-7 items-center justify-center rounded-[4px] ${name === "Text" ? "bg-[#d0d0d0]" : ""}`}>
                <Ico s={22}>{art}</Ico>
              </span>
            </button>
          ))}
          <button aria-label="Weitere Werkzeuge" className="flex h-[22px] items-center"><Tri dir="right" /></button>
        </div>

        <div className="grid min-w-0 flex-1 grid-cols-[19px_1fr] grid-rows-[19px_1fr_19px]">
          <span className="flex justify-center pt-[7px]">
            <svg width="7" height="5" viewBox="0 0 7 5" aria-hidden="true"><path d="M0 0h7v4H0z" fill="#f0a020" /><path d="M0 .5h7M3.500 2v3" stroke="#222" strokeWidth="1.200" /></svg>
          </span>
          <TopRuler />
          <div className="min-h-0 pb-px pt-px"><SideRuler /></div>
          <div className="relative overflow-hidden bg-white">
            <div className="absolute left-[594px] top-[70px] h-[394px] w-[279px] border border-[#666] bg-white shadow-[2px_2px_0_0_#666]" />
            <div className="absolute left-[663px] top-[232px] h-[44px] w-[74px] border border-[#8080ff]" />
            <svg className="absolute left-[665px] top-[236px]" width="42" height="26" fill="none" aria-hidden="true">
              <path d="M.5.500h41v25H.5z" stroke="#555" strokeDasharray="4 4" />
            </svg>
            <p className='absolute left-[664px] top-[233px] font-["DejaVu_Sans",sans-serif] text-[25px] font-bold leading-7 text-black'>My</p>
            <span className="absolute left-[688px] top-[235px] h-[27px] w-0.5 bg-[#777]" />
            <span className="absolute left-[661px] top-[253px] size-[5px] border border-black bg-white" />
            <svg className="absolute left-[731px] top-[270px]" width="11" height="11" aria-hidden="true">
              <path d="M5.500 1.500l4 4-4 4-4-4z" fill="#fff" stroke="#000" />
            </svg>
          </div>
          <span />
          <div className="pt-1">
            <div className="h-2.5 bg-white px-[3px] pt-[3px]"><div className="h-[5px] rounded-full bg-[#888]" /></div>
          </div>
        </div>

        <div className="flex w-9 shrink-0 flex-col pl-[7px]">
          <span className="flex h-[23px] w-[9px] items-end justify-center pb-[5px]">
            <svg width="9" height="11" viewBox="0 0 9 11" fill="none" aria-hidden="true"><path d="M0 0h9v11H0z" fill="#e9e9e9" /><path d="M3 2.500l1-1h2.500v8h-3v-5H2v-2z" fill="#fff" stroke="#888" /></svg>
          </span>
          <div className="flex w-[9px] flex-1 flex-col bg-white pl-0.5">
            <span className="flex-[163]" />
            <span className="w-[5px] flex-[218] rounded-full bg-[#888]" />
            <span className="flex-[160]" />
          </div>
          <span className="flex h-[19px] w-[9px] items-center justify-center">
            <svg width="6" height="6" viewBox="0 0 6 6" aria-hidden="true"><path d="M0 0h3l3 3v3H4L0 2z" fill="#8aa08a" /><path d="M0 3l3 3H0z" fill="#d09070" /><path d="M3 1l3 4" stroke="#555" strokeWidth="0.700" /></svg>
          </span>
        </div>

        <div className="flex w-7 shrink-0 flex-col pt-[5px]">
          {COMMANDS.map((group, g) => (
            <React.Fragment key={g}>
              {g > 0 && <HSep />}
              {group.map(([name, art]) => (
                <button key={name} aria-label={name} className="flex size-7 shrink-0 items-center justify-center"><Ico>{art}</Ico></button>
              ))}
            </React.Fragment>
          ))}
          <button aria-label="Weitere Befehle" className="flex h-[30px] items-center justify-center"><Tri dir="right" /></button>
        </div>

        <div className="ml-2 mr-1 flex w-7 shrink-0 flex-col pt-[5px]">
          {SNAPS.map((group, g) => (
            <React.Fragment key={g}>
              {g > 0 && <HSep />}
              {group.map(([name, on, art]) => (
                <button key={name} aria-label={"Einrasten: " + name} className="flex size-7 shrink-0 items-center justify-center">
                  <span className={`flex size-[26px] items-center justify-center rounded-[4px] border ${on ? "border-[#c0c0c0] bg-[#d3d3d3]" : "border-transparent"}`}><Ico>{art}</Ico></span>
                </button>
              ))}
            </React.Fragment>
          ))}
          <button aria-label="Weitere Einrastoptionen" className="mt-3 flex h-[30px] items-center justify-center"><Tri dir="right" /></button>
        </div>
      </main>

      {/* palette */}
      <div className="mb-[5px] flex h-2.5 shrink-0 items-center pl-px">
        <div className="flex min-w-0 flex-1 overflow-hidden">
          <button aria-label="Keine Farbe" className="shrink-0">
            <svg width="10" height="10" viewBox="0 0 10 10" aria-hidden="true" className="block"><path d="M0 0l10 10M10 0L0 10" stroke="#8a1010" strokeWidth="1.100" /></svg>
          </button>
          {PALETTE.map((c, i) => (
            <button key={i} aria-label={"#" + c} className="h-2.5 w-2.5 shrink-0" style={{ backgroundColor: "#" + c }} />
          ))}
        </div>
        <button aria-label="Palettenmenü" className="flex w-[13px] justify-center"><Tri dir="left" /></button>
      </div>
      <div className="mr-3 flex h-[9px] shrink-0 bg-white pl-[3px] pt-0.5">
        <span className="h-[5px] flex-[600] rounded-full bg-[#888]" />
        <span className="flex-[1017]" />
      </div>

      {/* status bar */}
      <footer className="flex h-[33px] shrink-0 items-center pl-0.5 pt-0.5 text-xs">
        <div className="grid grid-cols-[47px_73px] grid-rows-[15px_15px] items-center leading-[15px]">
          <span>Füllung:</span>
          <span className="h-[15px] bg-black" />
          <span>Kontur:</span>
          <span className="text-center italic">Keine</span>
        </div>
        <span className="w-[18px] pl-1">O:</span>
        <Spin label="Deckkraft" value="0" width="w-[46px]" dimUp />
        <VSep w="w-[9px]" />
        <button aria-label="Ebene sichtbar" className="flex w-[22px] justify-center">
          <Ico>
            <path d="M1 8c3-4 10-4 14 1-4 5-10 5-14-1z" fill="#fff" stroke="#222" />
            <circle cx="8" cy="8.500" r="2.800" fill="#222" />
            <path d="M8 5V1.500M5 5.500L3.500 2.500M11 5.500l1.500-3M3 7L.5 5M13 7l2.500-2M3 11l-1 2M6 12l-.5 2M10 12l.5 2M13 11l1 2" stroke="#222" />
          </Ico>
        </button>
        <button aria-label="Ebene sperren" className="ml-1.5 flex w-[22px] justify-center">
          <Ico>
            <path d="M4.500 5V4c.5-3 6.500-3 7 0v3" stroke="#444" strokeWidth="1.200" strokeDasharray="2 0.800" />
            <path d="M4 7.500h8.500v6.500H4z" fill="#faf6dc" stroke="#333" />
            <path d="M10.500 9l1.500-.5V13.500h-3z" fill="#ecd860" /><path d="M7.500 9v3.500M6.500 10h2" stroke="#333" />
          </Ico>
        </button>
        <div className="relative ml-1 w-[98px]">
          <select aria-label="Aktuelle Ebene" className="block h-7 w-full appearance-none rounded-[4px] border border-[#c4c7d0] bg-white pl-[9px] font-bold text-[#3d3d3d]">
            <option>•Ebene 1</option>
          </select>
          <span className="pointer-events-none absolute right-[9px] top-[9px]"><Tri dir="down" /></span>
        </div>
        <span className="flex-1" />
        <span className="h-[30px] w-px bg-[#e9ebed]" />
        <dl className="ml-[3px] grid grid-cols-[16px_45px] grid-rows-[15px_15px] leading-[15px]">
          <dt>X:</dt>
          <dd className='text-right font-["DejaVu_Sans_Mono",monospace]'>90,71</dd>
          <dt>Y:</dt>
          <dd className='text-right font-["DejaVu_Sans_Mono",monospace]'>160,26</dd>
        </dl>
        <span className="ml-2 w-[14px]">Z:</span>
        <Spin label="Zoom" value="35%" width="w-14" pad="pl-[15px]" />
      </footer>

      {/* callout arrows */}
      <svg className="pointer-events-none absolute left-0 top-0 h-full w-full" aria-hidden="true">
        <g transform="translate(-1 0)" stroke="#f00" strokeWidth="4" strokeLinecap="round" fill="#f00">
          <path d="M379 148L336 104M494 141L467 110M624 257L714 338" />
          <path stroke="none" d="M326 93l18 8-15 16zM457 97l19 9.500-15 11zM728 351l-9-20-13 13z" />
        </g>
      </svg>
    </div>
  );
}
